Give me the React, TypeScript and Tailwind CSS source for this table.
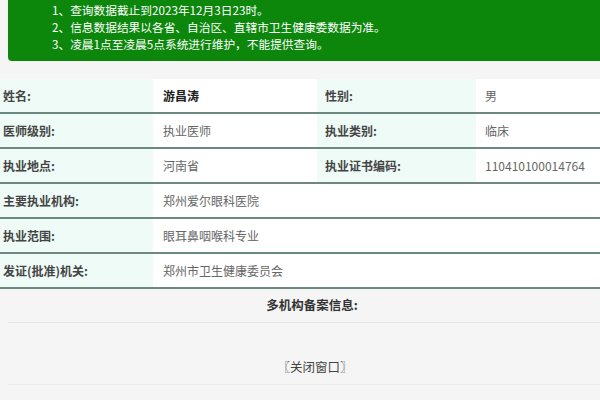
import React from "react";

const font = { fontFamily: '"Noto Sans CJK SC", "Noto Sans", sans-serif' };

function Row({
  l1,
  v1,
  l2,
  v2,
  bold,
}: {
  l1: string;
  v1: string;
  l2?: string;
  v2?: string;
  bold?: boolean;
}) {
  return (
    <div className="flex h-[35px] border-b-2 border-[#6d8781] text-[12px]">
      <div className="w-[153px] bg-[#effbf6] flex items-center pl-[3px] font-semibold text-[#444]">
        {l1}
      </div>
      {l2 !== undefined ? (
        <>
          <div
            className={
              "w-[164px] bg-white flex items-center pl-[10px] " +
              (bold ? "font-bold text-[#222]" : "text-[#666]")
            }
          >
            {v1}
          </div>
          <div className="w-[159px] bg-[#effbf6] flex items-center pl-[8px] font-semibold text-[#444]">
            {l2}
          </div>
          <div className="flex-1 bg-white flex items-center pl-[9px] text-[#666]">
            {v2}
          </div>
        </>
      ) : (
        <div className="flex-1 bg-white flex items-center pl-[10px] text-[#666]">
          {v1}
        </div>
      )}
    </div>
  );
}

export default function App() {
  return (
    <div className="w-[600px] h-[400px] bg-[#f5f5f5] overflow-hidden" style={font}>
      <div className="ml-[8px] h-[61px] bg-[#0c870c] rounded-bl-[4px] pl-[44px] pt-[1px] text-white text-[11.7px] leading-[17px]">
        <div>1、查询数据截止到2023年12月3日23时。</div>
        <div>2、信息数据结果以各省、自治区、直辖市卫生健康委数据为准。</div>
        <div>3、凌晨1点至凌晨5点系统进行维护，不能提供查询。</div>
      </div>
      <div className="h-[18px]" />
      <Row l1="姓名:" v1="游昌涛" l2="性别:" v2="男" bold />
      <Row l1="医师级别:" v1="执业医师" l2="执业类别:" v2="临床" />
      <Row l1="执业地点:" v1="河南省" l2="执业证书编码:" v2="110410100014764" />
      <Row l1="主要执业机构:" v1="郑州爱尔眼科医院" />
      <Row l1="执业范围:" v1="眼耳鼻咽喉科专业" />
      <Row l1="发证(批准)机关:" v1="郑州市卫生健康委员会" />
      <div className="ml-[8px] h-[34px] border-b border-[#e6e6e6] flex items-center justify-center pl-[16px] text-[12.5px] font-bold text-[#333]">
        多机构备案信息:
      </div>
      <div className="ml-[8px] h-[62px] border-b border-[#e9e9e9] flex items-end justify-center pl-[22px] pb-[7px] text-[12.5px] text-[#444]">
        〖关闭窗口〗
      </div>
    </div>
  );
}
